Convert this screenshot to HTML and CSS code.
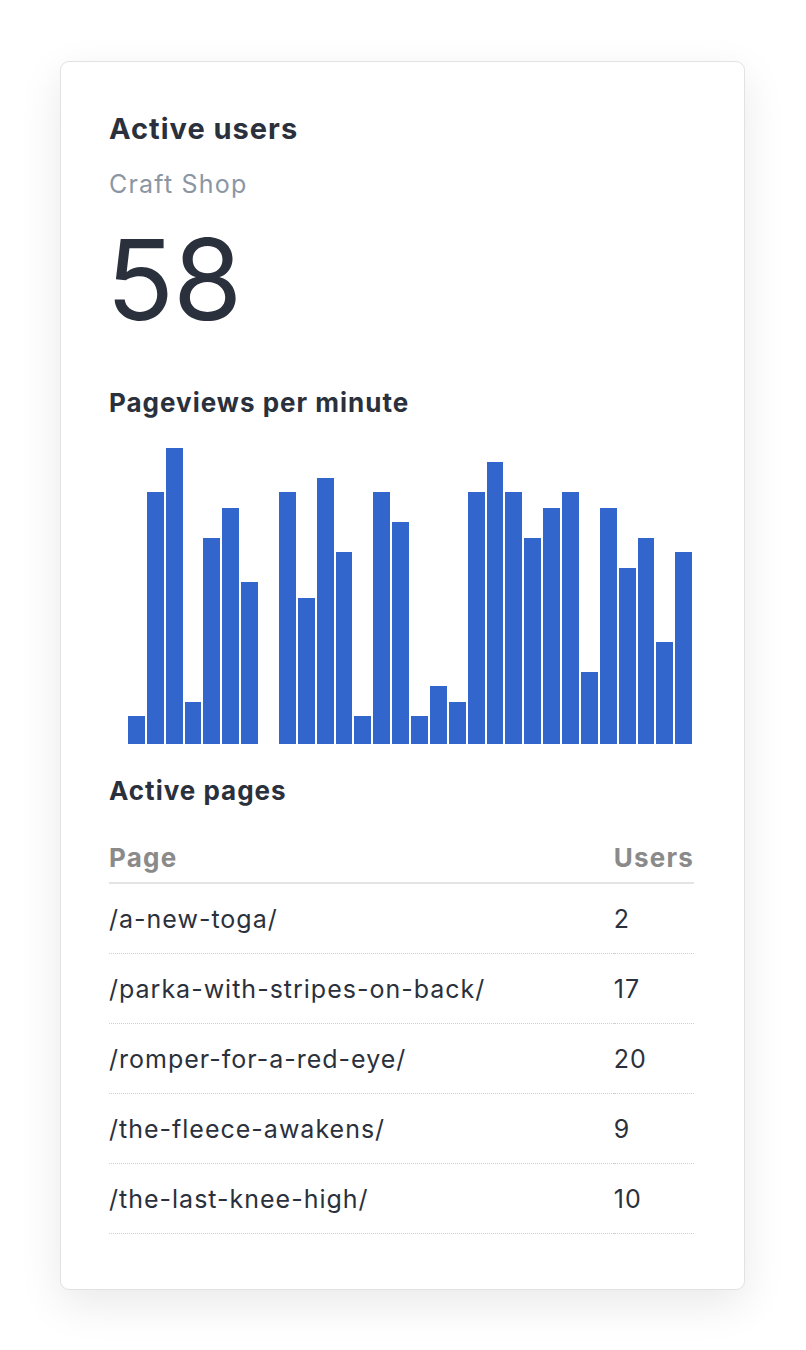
FILE: index.html
```html
<!DOCTYPE html>
<html>
<head>
<meta charset="utf-8">
<link rel="stylesheet" href="styles.css">
</head>
<body>
<div class="card">
  <h1 class="title">Active users</h1>
  <div class="subtitle">Craft Shop</div>
  <div class="count">58</div>
  <h2 class="section">Pageviews per minute</h2>
  <div class="chart">
    <div class="slot"><div class="bar" style="height:0px"></div></div>
    <div class="slot"><div class="bar" style="height:28px"></div></div>
    <div class="slot"><div class="bar" style="height:252px"></div></div>
    <div class="slot"><div class="bar" style="height:296px"></div></div>
    <div class="slot"><div class="bar" style="height:42px"></div></div>
    <div class="slot"><div class="bar" style="height:206px"></div></div>
    <div class="slot"><div class="bar" style="height:236px"></div></div>
    <div class="slot"><div class="bar" style="height:162px"></div></div>
    <div class="slot"><div class="bar" style="height:0px"></div></div>
    <div class="slot"><div class="bar" style="height:252px"></div></div>
    <div class="slot"><div class="bar" style="height:146px"></div></div>
    <div class="slot"><div class="bar" style="height:266px"></div></div>
    <div class="slot"><div class="bar" style="height:192px"></div></div>
    <div class="slot"><div class="bar" style="height:28px"></div></div>
    <div class="slot"><div class="bar" style="height:252px"></div></div>
    <div class="slot"><div class="bar" style="height:222px"></div></div>
    <div class="slot"><div class="bar" style="height:28px"></div></div>
    <div class="slot"><div class="bar" style="height:58px"></div></div>
    <div class="slot"><div class="bar" style="height:42px"></div></div>
    <div class="slot"><div class="bar" style="height:252px"></div></div>
    <div class="slot"><div class="bar" style="height:282px"></div></div>
    <div class="slot"><div class="bar" style="height:252px"></div></div>
    <div class="slot"><div class="bar" style="height:206px"></div></div>
    <div class="slot"><div class="bar" style="height:236px"></div></div>
    <div class="slot"><div class="bar" style="height:252px"></div></div>
    <div class="slot"><div class="bar" style="height:72px"></div></div>
    <div class="slot"><div class="bar" style="height:236px"></div></div>
    <div class="slot"><div class="bar" style="height:176px"></div></div>
    <div class="slot"><div class="bar" style="height:206px"></div></div>
    <div class="slot"><div class="bar" style="height:102px"></div></div>
    <div class="slot"><div class="bar" style="height:192px"></div></div>
  </div>
  <h2 class="section pages-title">Active pages</h2>
  <table class="pages">
    <thead>
      <tr><th class="col-page">Page</th><th class="col-users">Users</th></tr>
    </thead>
    <tbody>
      <tr><td>/a-new-toga/</td><td>2</td></tr>
      <tr><td>/parka-with-stripes-on-back/</td><td>17</td></tr>
      <tr><td>/romper-for-a-red-eye/</td><td>20</td></tr>
      <tr><td>/the-fleece-awakens/</td><td>9</td></tr>
      <tr><td>/the-last-knee-high/</td><td>10</td></tr>
    </tbody>
  </table>
</div>
</body>
</html>
```

FILE: styles.css
```css
html, body {
  margin: 0;
  padding: 0;
  background: #ffffff;
}
body {
  font-family: Inter, "Noto Sans", "Liberation Sans", sans-serif;
  color: #2b313c;
  padding: 61px 61px 60px 60px;
}
.card {
  box-sizing: border-box;
  width: 685px;
  background: #fff;
  border: 1px solid #e2e2e6;
  border-radius: 9px;
  box-shadow: 0 14px 44px rgba(0, 0, 0, 0.09);
  padding: 49px 50px 55px 48px;
}
.title {
  margin: 0;
  font-size: 29px;
  line-height: 36px;
  font-weight: 700;
  letter-spacing: 1px;
  color: #2b313c;
}
.subtitle {
  margin-top: 21px;
  font-size: 25px;
  line-height: 32px;
  letter-spacing: 1.2px;
  color: #8c96a3;
}
.count {
  margin-top: 23px;
  margin-left: -3px;
  font-size: 112px;
  line-height: 112px;
  font-weight: 400;
  color: #2b313c;
  letter-spacing: -1px;
}
.section {
  margin: 0;
  margin-top: 52px;
  font-size: 26px;
  line-height: 32px;
  font-weight: 700;
  letter-spacing: 1px;
  color: #2b313c;
}
.chart {
  margin-top: 25px;
  height: 300px;
  display: flex;
  align-items: flex-end;
}
.slot {
  flex: 1;
  display: flex;
  align-items: flex-end;
  height: 100%;
}
.bar {
  flex: 1;
  margin-right: 2px;
  background: #3366cc;
}
.pages-title {
  margin-top: 31px;
}
.pages {
  margin-top: 35px;
  width: 100%;
  border-collapse: collapse;
  font-size: 25px;
  letter-spacing: 1px;
}
.pages th {
  text-align: left;
  font-size: 26px;
  font-weight: 700;
  letter-spacing: 1.2px;
  color: #8a8a8a;
  padding: 0 0 8px 0;
  line-height: 32px;
  border-bottom: 2px solid #e4e4e6;
}
.pages th.col-users,
.pages td:last-child {
  width: 80px;
}
.pages td {
  padding: 19px 0 18px 0;
  line-height: 32px;
  border-bottom: 1px dotted #d0d0d4;
  color: #2b313c;
}
```
